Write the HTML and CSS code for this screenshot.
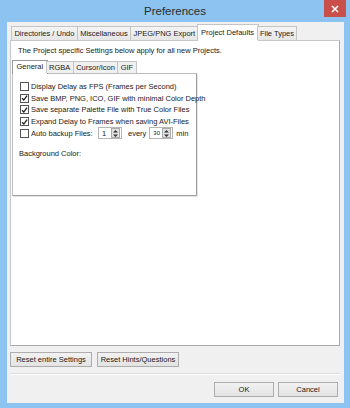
FILE: index.html
```html
<!DOCTYPE html>
<html lang="en">
<head>
  <meta charset="UTF-8">
  <meta name="viewport" content="width=device-width, initial-scale=1.0">
  <title>Preferences</title>
  <link rel="stylesheet" href="styles.css">
</head>
<body>

  <div class="window">
    <!-- Title bar -->
    <div class="titlebar">
      <span></span>
      <span class="title">Preferences</span>
      <span class="close">
        <svg width="8" height="8" viewBox="0 0 8 8"><path d="M1 1L7 7M7 1L1 7" stroke="#fff" stroke-width="1.6"/></svg>
      </span>
    </div>

    <div class="client">
      <!-- Outer tabs -->
      <div class="tabs">
        <span class="tab">Directories / Undo</span>
        <span class="tab">Miscellaneous</span>
        <span class="tab">JPEG/PNG Export</span>
        <span class="tab active">Project Defaults</span>
        <span class="tab">File Types</span>
      </div>

      <div class="panel">
        <p class="intro">The Project specific Settings below apply for all new Projects.</p>

        <!-- Inner tabs -->
        <div class="tabs inner-tabs">
          <span class="tab active">General</span>
          <span class="tab">RGBA</span>
          <span class="tab">Cursor/Icon</span>
          <span class="tab">GIF</span>
        </div>

        <div class="subpanel">
          <div class="row"><span class="check"></span>Display Delay as FPS (Frames per Second)</div>
          <div class="row"><span class="check on"><svg width="8" height="8" viewBox="0 0 8 8"><path d="M1.2 4.2L3.2 6.3L6.9 1.2" fill="none" stroke="#222" stroke-width="1.5"/></svg></span>Save BMP, PNG, ICO, GIF with minimal Color Depth</div>
          <div class="row"><span class="check on"><svg width="8" height="8" viewBox="0 0 8 8"><path d="M1.2 4.2L3.2 6.3L6.9 1.2" fill="none" stroke="#222" stroke-width="1.5"/></svg></span>Save separate Palette File with True Color Files</div>
          <div class="row"><span class="check on"><svg width="8" height="8" viewBox="0 0 8 8"><path d="M1.2 4.2L3.2 6.3L6.9 1.2" fill="none" stroke="#222" stroke-width="1.5"/></svg></span>Expand Delay to Frames when saving AVI-Files</div>
          <div class="row">
            <span class="check"></span><span class="backup-label">Auto backup Files:</span>
            <span class="spin"><span class="spin-val">1</span><span class="spin-btn"><svg width="7" height="9" viewBox="0 0 7 9"><path d="M3.5 1L6 3.6H1Z M3.5 8L6 5.4H1Z" fill="#333"/></svg></span></span>
            <span class="every">every</span>
            <span class="spin"><span class="spin-val small">30</span><span class="spin-btn"><svg width="7" height="9" viewBox="0 0 7 9"><path d="M3.5 1L6 3.6H1Z M3.5 8L6 5.4H1Z" fill="#333"/></svg></span></span>
            <span class="min">min</span>
          </div>
          <p class="bg-label">Background Color:</p>
        </div>
      </div>

      <!-- Reset buttons -->
      <div class="reset-row">
        <button class="btn reset">Reset entire Settings</button>
        <button class="btn reset">Reset Hints/Questions</button>
      </div>

      <div class="footer">
        <button class="btn dlg">OK</button>
        <button class="btn dlg">Cancel</button>
      </div>
    </div>
  </div>

</body>
</html>
```

FILE: styles.css
```css
body {
  margin: 0;
  padding: 0;
  font-family: "Liberation Sans", Arial, sans-serif;
  font-size: 7.5px;
  color: #1a1a1a;
}
.window {
  width: 350px;
  height: 408px;
  background-color: #8cc3f0;
  display: flex;
  flex-direction: column;
}
.titlebar {
  height: 22px;
  display: grid;
  grid-template-columns: 1fr auto 1fr;
  align-items: start;
}
.title {
  font-size: 11.5px;
  color: #2b2b2b;
  line-height: 22px;
}
.close {
  justify-self: end;
  margin-right: 4px;
  width: 22px;
  height: 17px;
  background-color: #c9504a;
  display: flex;
  align-items: center;
  justify-content: center;
}
.client {
  margin: 0 6px 5px 7px;
  flex: 1;
  background-color: #f0f0f0;
  display: flex;
  flex-direction: column;
  padding: 2px 4px 0 3px;
}

/* tabs */
.tabs {
  display: flex;
  align-items: flex-end;
  padding-left: 1px;
  height: 16px;
  position: relative;
  z-index: 1;
}
.tab {
  height: 13px;
  line-height: 13px;
  padding: 0 2.4px;
  border: 1px solid #c4c4c4;
  border-bottom: none;
  background: linear-gradient(#f4f4f4, #e6e6e6);
  margin-right: -1px;
  white-space: nowrap;
}
.tab.active {
  height: 16px;
  line-height: 15px;
  background: #fff;
  margin-bottom: -1px;
  padding: 0 3.5px;
  margin-left: -1px;
  margin-right: -2px;
}
.panel {
  height: 304px;
  background-color: #fff;
  border: 1px solid #c8c8c8;
  border-right-color: #a9a9a9;
  border-bottom-color: #a9a9a9;
  padding: 0 1px;
}
.intro {
  margin: 5px 0 3px 6px;
  line-height: 10px;
}
.inner-tabs {
  height: 14px;
  padding-left: 1px;
}
.inner-tabs .tab {
  height: 11px;
  line-height: 12px;
  background: #f0f0f0;
}
.inner-tabs .tab.active {
  height: 13px;
  line-height: 12px;
  background: #fff;
  border-color: #999;
}
.subpanel {
  width: 176px;
  height: 114px;
  border: 1px solid #bdbdbd;
  border-right-color: #a0a0a0;
  border-bottom-color: #a0a0a0;
  box-shadow: 1px 1px 0 #e4e4e4;
  padding: 7px 0 0 7px;
}
.row {
  display: flex;
  align-items: center;
  height: 11.6px;
  white-space: nowrap;
}
.check {
  width: 7px;
  height: 7px;
  border: 1px solid #555;
  background: #fff;
  margin-right: 2px;
  display: flex;
  align-items: center;
  justify-content: center;
}
.backup-label {
  width: 67px;
}
.spin {
  width: 22px;
  height: 10px;
  border: 1px solid #b5b5b5;
  display: flex;
  align-items: center;
  justify-content: space-between;
}
.spin-val {
  padding-left: 3px;
}
.spin-val.small {
  font-size: 6px;
}
.spin-btn {
  width: 7px;
  height: 8px;
  margin-right: 1px;
  background: #e2e2e2;
  border: 1px solid #aaa;
  display: flex;
  align-items: center;
  justify-content: center;
}
.every {
  margin: 0 3px 0 6px;
}
.min {
  margin-left: 3px;
}
.bg-label {
  margin: 10px 0 0 -1px;
}

/* buttons */
.btn {
  font-family: "Liberation Sans", Arial, sans-serif;
  font-size: 7.5px;
  color: #1a1a1a;
  height: 15px;
  padding: 0;
  border: 1px solid #adadad;
  background: linear-gradient(#f2f2f2, #e3e3e3);
}
.reset-row {
  display: flex;
  gap: 5px;
  margin-top: 6px;
  padding-bottom: 6px;
  border-bottom: 1px solid #dcdcdc;
}
.reset {
  width: 82px;
}
.footer {
  display: flex;
  justify-content: flex-end;
  gap: 4px;
  padding: 7px 2px 0 0;
  border-top: 1px solid #fff;
}
.dlg {
  width: 60px;
}
```
